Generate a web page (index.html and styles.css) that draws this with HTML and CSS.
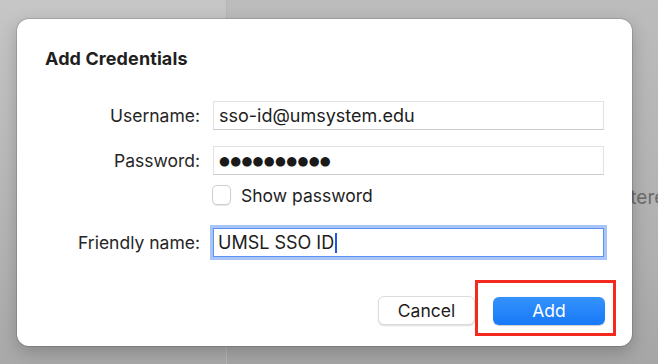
FILE: index.html
```html
<!DOCTYPE html>
<html lang="en">
<head>
    <meta charset="UTF-8">
    <meta name="viewport" content="width=device-width, initial-scale=1.0">
    <title>Add Credentials</title>
    <link rel="stylesheet" href="styles.css">
</head>
<body>

    <div class="pane-left"></div>
    <div class="pane-right">
        <p class="behind-text">entered</p>
    </div>

    <div class="dialog">
        <h2>Add Credentials</h2>

        <div class="form-row">
            <label>Username:</label>
            <div class="field">sso-id@umsystem.edu</div>
        </div>

        <div class="form-row">
            <label>Password:</label>
            <div class="field dots">●●●●●●●●●●</div>
        </div>

        <div class="check-row">
            <span class="checkbox"></span>
            <span>Show password</span>
        </div>

        <div class="form-row focus-row">
            <label>Friendly name:</label>
            <div class="field focused">UMSL SSO ID<span class="caret"></span></div>
        </div>

        <div class="buttons">
            <button type="button" class="btn-cancel">Cancel</button>
            <span class="highlight">
                <button type="button" class="btn-add">Add</button>
            </span>
        </div>
    </div>

</body>
</html>
```

FILE: styles.css
```css
body {
    font-family: 'Inter', 'Liberation Sans', sans-serif;
    margin: 0;
    padding: 0;
    width: 658px;
    height: 364px;
    display: flex;
    overflow: hidden;
    position: relative;
    color: #1d1d1d;
}

.pane-left {
    width: 226px;
    flex-shrink: 0;
    background: linear-gradient(to bottom, #c6c6c6, #b3b3b3 70%, #a9a9a9);
}

.pane-right {
    flex: 1;
    min-width: 0;
    overflow: hidden;
    background: linear-gradient(to bottom, #bcbcbc, #b0b0b0 70%, #a6a6a6);
    border-left: 1px solid #b6b6b6;
}

.behind-text {
    margin: 186px 0 0 381px;
    font-size: 19px;
    color: #6c6c6c;
    white-space: nowrap;
}

.dialog {
    position: absolute;
    left: 17px;
    top: 19px;
    width: 615px;
    height: 327px;
    box-sizing: border-box;
    padding: 29px 27px 0 28px;
    background-color: #fff;
    border-radius: 12px;
    box-shadow: 0 0 0 1px rgba(0, 0, 0, 0.12), 0 6px 18px rgba(0, 0, 0, 0.22);
}

.dialog h2 {
    margin: 0 0 31px 0;
    font-size: 18px;
    line-height: 22px;
    font-weight: 700;
    color: #1f1f1f;
    letter-spacing: 0.1px;
}

.form-row {
    display: flex;
    align-items: center;
    height: 29px;
    margin-bottom: 16px;
    margin-right: 1px;
}

.form-row label {
    width: 155px;
    margin-right: 13px;
    text-align: right;
    font-size: 17.5px;
    color: #262626;
}

.field {
    flex: 1;
    height: 29px;
    box-sizing: border-box;
    padding: 0 5px;
    display: flex;
    align-items: center;
    font-size: 18px;
    border: 1px solid #e2e2e2;
    border-bottom-color: #cdcdcd;
    background-color: #fff;
}

.dots {
    font-family: 'DejaVu Sans', sans-serif;
    font-size: 12.5px;
    letter-spacing: 0.3px;
    padding-left: 5px;
    color: #1a1a1a;
}

.check-row {
    display: flex;
    align-items: center;
    margin: -6px 0 0 167px;
    height: 20px;
    font-size: 17.5px;
}

.checkbox {
    width: 19px;
    height: 20px;
    box-sizing: border-box;
    margin-right: 10px;
    border: 1px solid #cfcfcf;
    border-radius: 5px;
    box-shadow: 0 0.5px 1px rgba(0, 0, 0, 0.1);
}

.focus-row {
    margin-top: 23px;
}

.focused {
    border: 1px solid #5d92f0;
    box-shadow: 0 0 0 3px #a8c5fa;
    padding-left: 4px;
}

.caret {
    display: inline-block;
    width: 2px;
    height: 20px;
    margin-left: 1px;
    background-color: #1f55e8;
}

.buttons {
    display: flex;
    justify-content: flex-end;
    align-items: center;
    margin-top: 39px;
}

button {
    font-family: 'Inter', 'Liberation Sans', sans-serif;
    font-size: 17.5px;
    border-radius: 6px;
    cursor: pointer;
}

.btn-cancel {
    width: 97px;
    height: 29px;
    margin-right: 18px;
    background-color: #fff;
    color: #1d1d1d;
    border: 1px solid #dcdcdc;
    box-shadow: 0 1px 1.5px rgba(0, 0, 0, 0.15);
}

.highlight {
    position: relative;
    display: flex;
}

.highlight::after {
    content: "";
    position: absolute;
    top: -17px;
    left: -18px;
    right: -11px;
    bottom: -11px;
    border: 3px solid #f42a1e;
}

.btn-add {
    width: 112px;
    height: 28px;
    background: linear-gradient(to bottom, #3592fc, #1679f7);
    color: #fff;
    border: none;
    box-shadow: 0 0.5px 1px rgba(0, 0, 0, 0.2);
}
```
